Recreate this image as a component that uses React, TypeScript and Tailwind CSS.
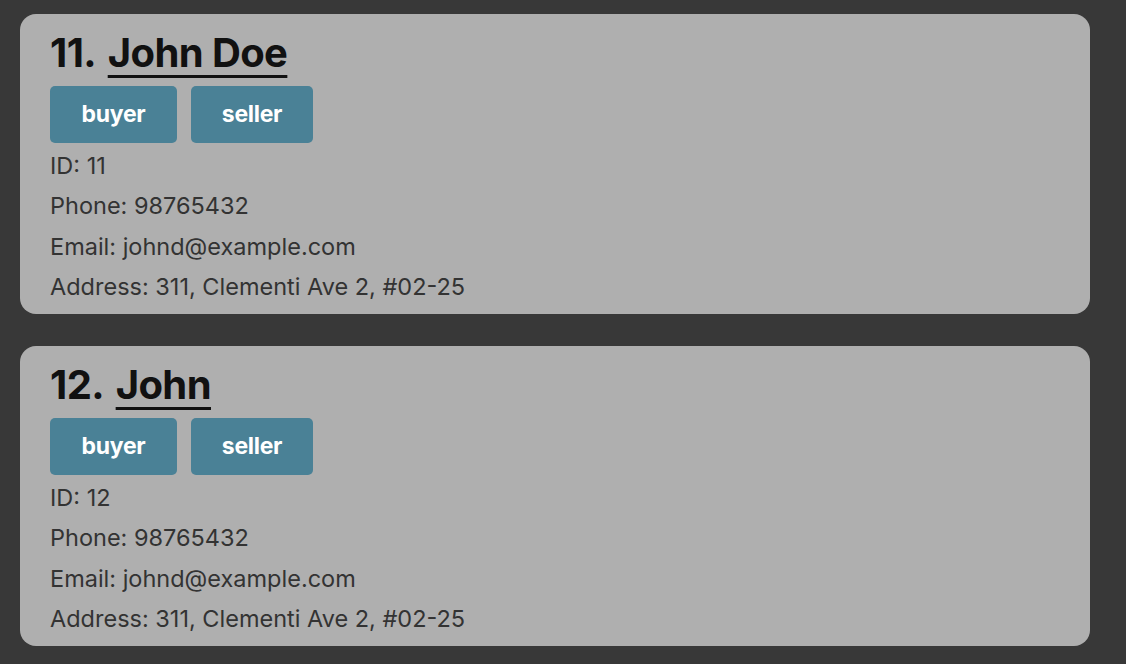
const people = [
  { index: 11, name: "John Doe", id: 11 },
  { index: 12, name: "John", id: 12 },
]

function PersonCard({ index, name, id }: { index: number; name: string; id: number }) {
  return (
    <div className="bg-[#afafaf] rounded-[16px] pl-[30px] pt-[15px] pb-[6px] h-[300px]">
      <div className="text-[40px] leading-[48px] font-bold text-[#111111] tracking-[-0.6px]">
        {index}.{" "}
        <span className="ml-[4px] underline decoration-[2.5px] underline-offset-[8px]">{name}</span>
      </div>
      <div className="flex gap-[14px] mt-[9px]">
        <span className="bg-[#4a8196] text-white font-bold text-[23px] tracking-[-0.3px] h-[57px] w-[127px] rounded-[5px] flex items-center justify-center">
          buyer
        </span>
        <span className="bg-[#4a8196] text-white font-bold text-[23px] tracking-[-0.3px] h-[57px] w-[122px] rounded-[5px] flex items-center justify-center">
          seller
        </span>
      </div>
      <div className="text-[23.5px] leading-[40.3px] text-[#333333] mt-[3px]">
        <div>ID: {id}</div>
        <div>Phone: 98765432</div>
        <div>Email: johnd@example.com</div>
        <div>Address: 311, Clementi Ave 2, #02-25</div>
      </div>
    </div>
  )
}

export default function App() {
  return (
    <div className="bg-[#383838] w-[1126px] h-[664px] overflow-hidden pt-[14px] pl-[20px] pr-[36px] flex flex-col gap-[32px]" style={{ fontFamily: "Inter, sans-serif" }}>
      {people.map((p) => (
        <PersonCard key={p.index} {...p} />
      ))}
    </div>
  )
}
